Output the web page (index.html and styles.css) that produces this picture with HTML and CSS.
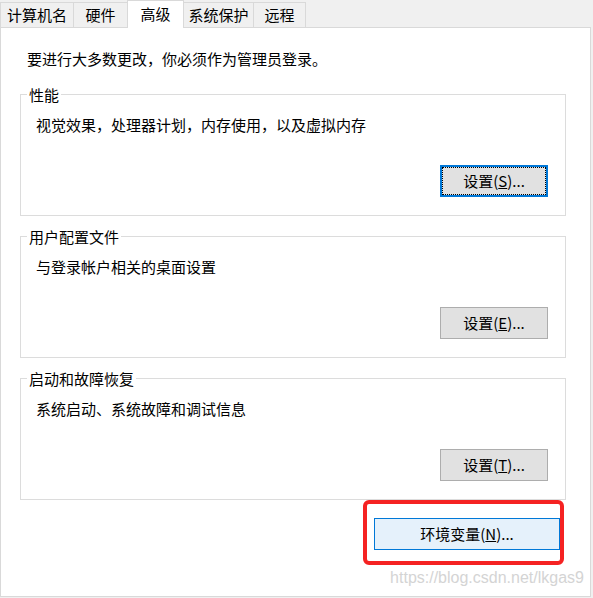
FILE: index.html
```html
<!DOCTYPE html>
<html lang="zh-CN">
<head>
    <meta charset="UTF-8">
    <meta name="viewport" content="width=device-width, initial-scale=1.0">
    <title>系统属性 - 高级</title>
    <link rel="stylesheet" href="styles.css">
</head>
<body>
    <div class="tabs">
        <div class="tab t1">计算机名</div>
        <div class="tab t2">硬件</div>
        <div class="tab t3 active">高级</div>
        <div class="tab t4">系统保护</div>
        <div class="tab t5">远程</div>
    </div>

    <div class="panel">
        <div class="intro">要进行大多数更改，你必须作为管理员登录。</div>

        <fieldset class="group">
            <legend>性能</legend>
            <div class="group-body">
                <div class="desc">视觉效果，处理器计划，内存使用，以及虚拟内存</div>
                <button class="btn focused">设置(<u>S</u>)...</button>
            </div>
        </fieldset>

        <fieldset class="group">
            <legend>用户配置文件</legend>
            <div class="group-body">
                <div class="desc">与登录帐户相关的桌面设置</div>
                <button class="btn">设置(<u>E</u>)...</button>
            </div>
        </fieldset>

        <fieldset class="group last">
            <legend>启动和故障恢复</legend>
            <div class="group-body">
                <div class="desc">系统启动、系统故障和调试信息</div>
                <button class="btn">设置(<u>T</u>)...</button>
            </div>
        </fieldset>

        <div class="mark">
            <button class="btn env">环境变量(<u>N</u>)...</button>
        </div>

        <div class="watermark">https://blog.csdn.net/lkgas9</div>
    </div>
</body>
</html>
```

FILE: styles.css
```css
* {
    box-sizing: border-box;
}

body {
    margin: 0;
    background: #f0f0f0;
    font-family: "Noto Sans CJK SC", "Noto Sans", sans-serif;
    font-size: 15px;
    color: #000;
}

/* tab strip */
.tabs {
    display: flex;
    align-items: flex-end;
    height: 27px;
}

.tab {
    height: 25px;
    display: flex;
    align-items: center;
    justify-content: center;
    border: 1px solid #d9d9d9;
    border-bottom: none;
    background: #f0f0f0;
    line-height: 18px;
    margin-left: -1px;
}

.t1 { width: 74px; margin-left: 0; }
.t2 { width: 55px; }
.t3 { width: 57px; }
.t4 { width: 71px; }
.t5 { width: 53px; }

.tab.active {
    height: 28px;
    margin-bottom: -1px;
    padding-bottom: 2px;
    background: #fff;
    position: relative;
    z-index: 1;
}

/* page */
.panel {
    width: 591px;
    height: 570px;
    background: #fff;
    border: 1px solid #d9d9d9;
    padding-top: 21px;
}

.intro {
    line-height: 20px;
    padding-left: 26px;
    margin-bottom: 17px;
}

.group {
    margin: 0 0 12px 19px;
    width: 546px;
    padding: 0;
    border: 1px solid #dcdcdc;
    min-width: 0;
}

.group.last {
    margin-bottom: 0;
}

.group legend {
    margin-left: 6px;
    padding: 0 2px;
    line-height: 17px;
}

.group-body {
    display: flex;
    flex-direction: column;
    padding: 12px 17px 18px 15px;
}

.desc {
    line-height: 20px;
    margin-bottom: 30px;
}

.btn {
    align-self: flex-end;
    width: 108px;
    height: 32px;
    font-family: inherit;
    font-size: 15px;
    color: #000;
    background: #e1e1e1;
    border: 1px solid #adadad;
    padding: 0;
    line-height: 20px;
}

.btn.focused {
    border: 2px solid #0078d7;
    outline: 1px dotted #000;
    outline-offset: -3px;
}

/* red annotation round the env button */
.mark {
    margin: 0 0 0 362px;
    width: 201px;
    height: 65px;
    border: 4px solid #f52222;
    border-radius: 6px;
    padding: 14px 0 0 7px;
}

.btn.env {
    width: 186px;
    background: #e5f1fb;
    border-color: #0078d7;
}

.watermark {
    margin-top: 3px;
    text-align: right;
    padding-right: 6px;
    font-family: "Liberation Sans", Arial, sans-serif;
    font-size: 16px;
    line-height: 20px;
    color: #d4d4d4;
}
```
